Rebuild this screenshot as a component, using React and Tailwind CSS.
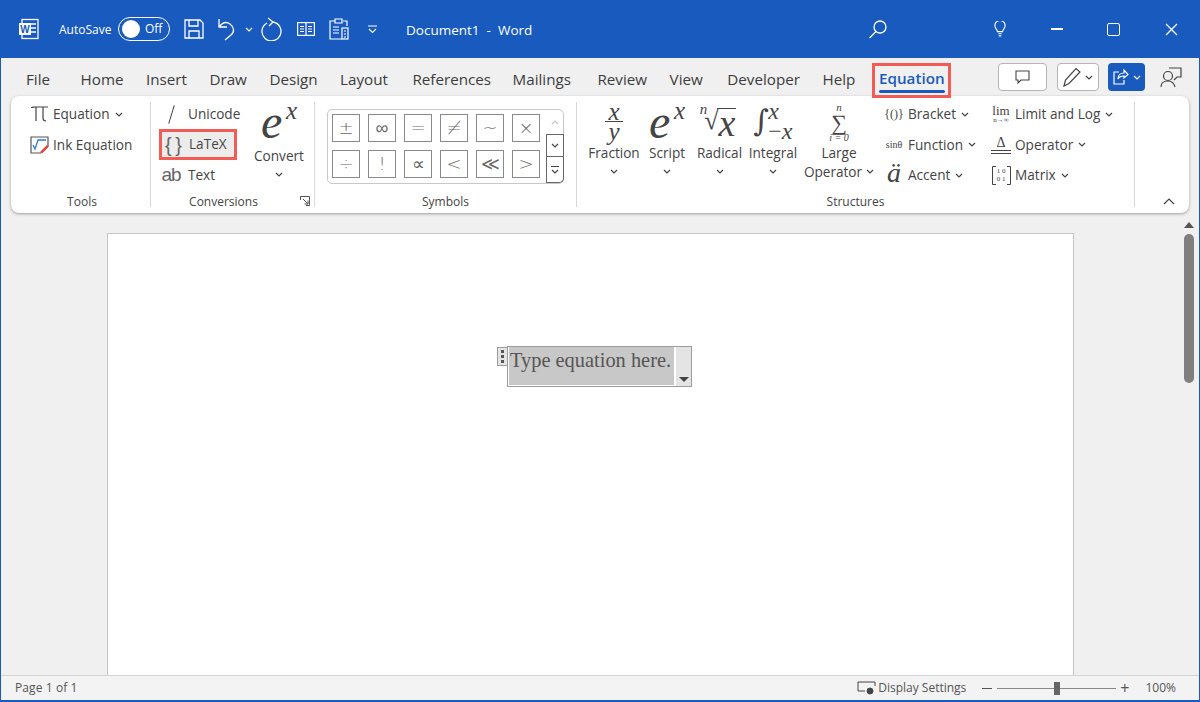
import React from "react";

const Chev = ({ className = "" }) => (
  <svg width="8" height="5" viewBox="0 0 8 5" className={className} fill="none" stroke="#444" strokeWidth="1.2">
    <path d="M1 1l3 3 3-3" />
  </svg>
);

const Tab = ({ children, className = "" }) => (
  <span className={`text-[15.2px] leading-[20px] text-[#3c3c3c] ${className}`}>{children}</span>
);

const Row = ({ icon, label, chev, iconW = "w-[20px]", gap = "ml-[4px]" }) => (
  <div className="flex items-center h-[30.5px] text-[13.6px] text-[#444]">
    <div className={`${iconW} flex items-center justify-center shrink-0`}>{icon}</div>
    <span className={gap}>{label}</span>
    {chev && <Chev className="ml-[5px]" />}
  </div>
);

const Big = ({ w, top, lines, chevInline }) => (
  <div className={`${w} flex flex-col items-center shrink-0 text-[13.6px] leading-[19px] text-[#444]`}>
    <div className="h-[44px] w-full flex items-center justify-center text-[#444]">{top}</div>
    {lines.map((l, i) => (
      <div key={i} className="flex items-center whitespace-nowrap">
        {l}
        {chevInline && i === lines.length - 1 && <Chev className="ml-[4px]" />}
      </div>
    ))}
    {!chevInline && <Chev className="mt-[7px]" />}
  </div>
);

const serif = "font-['Liberation_Serif',serif] italic";

const Ex = ({ className = "" }) => (
  <div className={`${serif} relative w-[36px] h-[42px] text-[#444] ${className}`}>
    <span className="absolute left-0 top-[-2px] text-[48px] leading-[48px]">e</span>
    <span className="absolute right-0 top-[-2px] text-[25px] leading-[25px]">x</span>
  </div>
);

const symbols = ["±", "∞", "=", "≠", "~", "×", "÷", "!", "∝", "<", "≪", ">"];

const Group = ({ w, label, children, extra }) => (
  <div className={`${w} h-full flex flex-col border-r border-[#d9d9d9] relative shrink-0`}>
    <div className="flex-1 min-h-0 flex">{children}</div>
    <div className="h-[15px] text-center text-[12px] leading-[15px] text-[#444] -mb-[2px]">{label}</div>
    {extra}
  </div>
);

export default function App() {
  return (
    <div className="w-[1200px] h-[702px] flex flex-col overflow-hidden bg-[#f0f0f0] border-x border-b-2 border-[#185abd] font-['Open_Sans',sans-serif]">
      {/* title bar */}
      <div className="h-[58px] -mx-px shrink-0 bg-[#185abd] flex items-center text-white">
        <svg width="22" height="22" viewBox="0 0 22 22" className="ml-[18px]" fill="none">
          <rect x="4" y="1.5" width="16" height="19" fill="#185abd" stroke="#fff" strokeWidth="1.3" />
          <path d="M12 6h6M12 10h6M12 14h6" stroke="#fff" strokeWidth="1.5" />
          <rect x="1" y="5" width="12" height="12" fill="#fff" />
          <text x="2.2" y="15" fontSize="10" fontWeight="700" fill="#185abd" fontFamily="Liberation Sans">W</text>
        </svg>
        <span className="ml-[19px] mt-[2px] text-[12px] w-[51px] whitespace-nowrap">AutoSave</span>
        <div className="ml-[8px] w-[52px] h-[24px] rounded-full border border-white flex items-center pl-[3px]">
          <span className="w-[18px] h-[18px] rounded-full bg-white" />
          <span className="ml-[5px] text-[12px]">Off</span>
        </div>
        <svg width="20" height="22" viewBox="0 0 20 22" className="ml-[14px]" fill="none" stroke="#fff" strokeWidth="1.3">
          <path d="M1 2h15l3 3v15H1zM5 2v6h9V2M5 20v-7h10v7" />
        </svg>
        <svg width="18" height="24" viewBox="0 0 18 24" className="ml-[14px]" fill="none" stroke="#fff" strokeWidth="1.3">
          <path d="M1 2v8h8M1 10c3-4 7-6 11-3 4 3 5 8 1 11l-6 5" />
        </svg>
        <Chev className="ml-[9px] [&_path]:stroke-white" />
        <svg width="22" height="24" viewBox="0 0 22 24" className="ml-[8px]" fill="none" stroke="#fff" strokeWidth="1.3">
          <path d="M7 1l5 4-4 4M12 5a9.500 9.500 0 1 1-6 1" />
        </svg>
        <svg width="18" height="14" viewBox="0 0 18 14" className="ml-[14px]" fill="none" stroke="#fff" strokeWidth="1.2">
          <rect x="0.6" y="0.6" width="16.8" height="12.8" />
          <path d="M9 1v12M3 4.500h4M3 7h4M3 9.500h4M11 4.500h4M11 7h4M11 9.500h4" />
        </svg>
        <svg width="20" height="22" viewBox="0 0 20 22" className="ml-[14px]" fill="none" stroke="#fff" strokeWidth="1.2">
          <path d="M6 3H1v18h12M14 3h4v5M6 1h7v4H6zM4 9h6M4 12h6M4 15h6" />
          <rect x="13" y="10" width="6" height="11" />
          <path d="M15 13h2M15 16h2M15 19h2" />
        </svg>
        <svg width="9" height="9" viewBox="0 0 9 9" className="ml-[19px]" fill="none" stroke="#fff" strokeWidth="1.1">
          <path d="M0 1h9M1 4l3.500 3.500L8 4" />
        </svg>
        <span className="ml-[29px] mt-[2px] text-[13.5px] whitespace-pre">Document1  -  Word</span>
        <svg width="20" height="20" viewBox="0 0 20 20" className="ml-[336px]" fill="none" stroke="#fff" strokeWidth="1.3">
          <circle cx="12" cy="8" r="6" />
          <path d="M8 12.500L1.500 19" />
        </svg>
        <svg width="12" height="16" viewBox="0 0 14 18" className="ml-[106px]" fill="none" stroke="#fff" strokeWidth="1.3">
          <path d="M4 12c0-2-3-3.500-3-7a6 6 0 0 1 12 0c0 3.500-3 5-3 7zM5 14.500h4M5.500 17h3" />
        </svg>
        <div className="ml-[45px] w-[12px] h-[1.5px] bg-white" />
        <div className="ml-[44px] w-[13px] h-[13px] rounded-[2px] border-[1.3px] border-white" />
        <svg width="13" height="13" viewBox="0 0 13 13" className="ml-[45px]" fill="none" stroke="#fff" strokeWidth="1.3">
          <path d="M1 1l11 11M12 1L1 12" />
        </svg>
      </div>

      {/* tabs */}
      <div className="h-[38px] shrink-0 flex items-center pl-[25px] relative">
        <div className="flex gap-[22.5px] mt-[3.5px]">
          <Tab className="mr-[8px]">File</Tab>
          <Tab>Home</Tab>
          <Tab>Insert</Tab>
          <Tab>Draw</Tab>
          <Tab>Design</Tab>
          <Tab>Layout</Tab>
          <Tab className="ml-[2px]">References</Tab>
          <Tab className="-ml-px">Mailings</Tab>
          <Tab className="ml-[4px]">Review</Tab>
          <Tab>View</Tab>
          <Tab className="ml-[2px]">Developer</Tab>
          <Tab>Help</Tab>
        </div>
        <div className="ml-[17px] mt-[7px] w-[79px] h-[35px] border-[3px] border-[#f25c54] flex flex-col items-center justify-center bg-[#f0f0f0] z-10">
          <span className="text-[15.2px] leading-[20px] font-semibold text-[#185abd]">Equation</span>
          <span className="w-[66px] h-[3px] rounded-full bg-[#185abd] mt-[2px]" />
        </div>
        <div className="ml-auto flex items-center mr-[17px]">
          <div className="w-[49px] h-[28px] rounded-[4px] bg-white border border-[#b5b5b5] flex items-center justify-center">
            <svg width="15" height="14" viewBox="0 0 15 14" fill="none" stroke="#444" strokeWidth="1.1">
              <path d="M1 1h13v9H6l-3 3v-3H1z" />
            </svg>
          </div>
          <div className="ml-[10px] w-[42px] h-[28px] rounded-[4px] bg-white border border-[#b5b5b5] flex items-center justify-center gap-[4px]">
            <svg width="18" height="20" viewBox="0 0 18 20" fill="none" stroke="#444" strokeWidth="1.2">
              <path d="M1 19l1.500-6L13 1.500l4 3.500L6 16.500z" />
            </svg>
            <Chev />
          </div>
          <div className="ml-[9px] w-[37px] h-[28px] rounded-[4px] bg-[#185abd] flex items-center justify-center gap-[4px]">
            <svg width="16" height="16" viewBox="0 0 16 16" fill="none" stroke="#fff" strokeWidth="1.2">
              <path d="M6 3H1v12h10v-4M5 10c0-4 3-6 6-6V1l4 4.500L11 9V7c-3 0-5 1-6 3z" />
            </svg>
            <Chev className="[&_path]:stroke-white" />
          </div>
          <svg width="22" height="22" viewBox="0 0 22 22" className="ml-[15px]" fill="none" stroke="#444" strokeWidth="1.2">
            <circle cx="8" cy="10" r="4.500" />
            <path d="M1 21c0-4 3-6 7-6s6 2 7 6M9 2h12v9h-4l-3 3" />
          </svg>
        </div>
      </div>

      {/* ribbon */}
      <div className="h-[117px] shrink-0 mx-[10px] rounded-[8px] bg-white shadow-[0_1px_3px_rgba(0,0,0,0.35)] flex py-[6px] relative">
        <Group w="w-[140px]" label={<span className="block pl-[3px]">Tools</span>}>
          <div className="pl-[18px] -mt-[3px]">
            <Row
              icon={
                <svg width="17" height="16" viewBox="0 0 17 16" fill="none" stroke="#444" strokeWidth="1.2">
                  <path d="M0 1.500c2 0 3-.500 4-.500h13M5 1v14M12 1v11c0 2 1 3 3 3" />
                </svg>
              }
              label="Equation"
              chev
            />
            <Row
              icon={
                <svg width="19" height="18" viewBox="0 0 19 18" fill="none">
                  <path d="M11 17H1V1h17v9" stroke="#555" strokeWidth="1.2" />
                  <path d="M3 9l2 4 3-9h8" stroke="#2b7cd3" strokeWidth="1.3" />
                  <path d="M10 16l7-7 2 1.500-7 7z" fill="#d8453a" />
                </svg>
              }
              label="Ink Equation"
            />
          </div>
        </Group>
        <Group
          w="w-[164px]"
          label={<span className="block pr-[18px]">Conversions</span>}
          extra={
            <svg width="10" height="10" viewBox="0 0 10 10" className="absolute right-[4px] bottom-[1px]" fill="none" stroke="#555">
              <path d="M.500 4V.500h9v9H6M3 3l5 5M8 4.500V8H4.500" />
            </svg>
          }
        >
          <div className="flex -mt-[3px]">
            <div className="ml-[8px] w-[78px]">
              <Row
                icon={<span className="block w-px h-[19px] rotate-[17deg] bg-[#444]" />}
                label="Unicode"
                iconW="w-[24px]"
                gap="ml-[5px]"
              />
              <div className="h-[31px] -my-[0.5px] border-[3px] border-[#f25c54] bg-[#ececec] flex items-center text-[13.6px] text-[#444] pl-[3px]">
                <span className="font-['Liberation_Sans',sans-serif] text-[20px] leading-[20px] w-[22px] whitespace-pre tracking-[-1px] text-[#666]">{"{ }"}</span>
                <span className="ml-[2px]">LaTeX</span>
              </div>
              <Row
                icon={<span className="text-[19px] leading-[19px] text-[#666] tracking-[-1px] font-['Liberation_Sans',sans-serif]">ab</span>}
                label="Text"
                iconW="w-[24px]"
                gap="ml-[5px]"
              />
            </div>
            <div className="ml-[17px] mt-[2.5px]">
              <Big w="w-[50px]" top={<Ex className="-translate-y-[3px]" />} lines={["Convert"]} />
            </div>
          </div>
        </Group>
        <Group w="w-[262px]" label="Symbols">
          <div className="ml-[12px] mt-[7px] w-[237px] h-[75px] rounded-[5px] border border-[#c8c8c8] flex">
            <div className="grid grid-cols-[repeat(6,28px)] gap-[8px] py-[4px] pl-[4px] w-[218px] shrink-0 content-start">
              {symbols.map((s) => (
                <div key={s} className="w-[28px] h-[28px] border border-[#8a8a8a] flex items-center justify-center text-[18px] leading-none text-[#666] font-['DejaVu_Sans',sans-serif] font-light">
                  {s}
                </div>
              ))}
            </div>
            <div className="flex-1 flex flex-col -mr-px">
              <div className="h-[24px] flex items-center justify-center">
                <Chev className="rotate-180 opacity-30" />
              </div>
              <div className="h-[23px] border border-[#666] flex items-center justify-center">
                <Chev />
              </div>
              <div className="flex-1 border border-t-0 border-[#666] rounded-br-[5px] flex flex-col items-center justify-center">
                <div className="w-[8px] h-px bg-[#444] mb-[2px]" />
                <Chev />
              </div>
            </div>
          </div>
        </Group>
        <Group w="w-[558px]" label="Structures">
          <div className="flex pl-[11px] -mt-[3px]">
            <Big
              w="w-[52px]"
              top={
                <div className={`${serif} flex flex-col items-center text-[25px] leading-[16px] mt-[1px]`}>
                  <span>x</span>
                  <span className="w-[18px] h-px bg-[#444] mt-px mb-[2px]" />
                  <span>y</span>
                </div>
              }
              lines={["Fraction"]}
            />
            <Big w="w-[54px]" top={<Ex />} lines={["Script"]} />
            <Big
              w="w-[51px]"
              top={
                <div className={`${serif} flex items-start text-[#444] -ml-[3px]`}>
                  <span className="text-[15px] leading-[15px] -mr-[3px]">n</span>
                  <span className="text-[26px] leading-[38px] not-italic -mr-[1px]">√</span>
                  <span className="text-[38px] leading-[28px] border-t-[1.5px] border-[#444] mt-[6px] px-px">x</span>
                </div>
              }
              lines={["Radical"]}
            />
            <Big
              w="w-[56px]"
              top={
                <div className={`${serif} flex items-center text-[#444]`}>
                  <span className="text-[30px] leading-[34px] font-['DejaVu_Serif',serif] not-italic">∫</span>
                  <div className="flex flex-col items-start -ml-[1px] text-[24px] leading-[20px]">
                    <span>x</span>
                    <span className="whitespace-nowrap"><span className="not-italic">−</span>x</span>
                  </div>
                </div>
              }
              lines={["Integral"]}
            />
            <Big
              w="w-[76px]"
              top={
                <div className="font-['Liberation_Serif',serif] flex flex-col items-center text-[#444] mt-[3px]">
                  <span className="italic text-[11px] leading-[9px]">n</span>
                  <span className="text-[22px] leading-[21px]">∑</span>
                  <span className="text-[10px] leading-[10px] italic whitespace-nowrap">i = 0</span>
                </div>
              }
              lines={["Large", "Operator"]}
              chevInline
            />
            <div className="ml-[7px] w-[107px]">
              <Row
                icon={<span className="font-['Liberation_Serif',serif] text-[12px] tracking-[0px]">{"{()}"}</span>}
                label="Bracket"
                chev
              />
              <Row
                icon={<span className="font-['Liberation_Serif',serif] text-[10px]">sinθ</span>}
                label="Function"
                chev
              />
              <Row
                icon={<span className={`${serif} text-[28px] leading-[28px] -mt-[4px]`}>ä</span>}
                label="Accent"
                chev
              />
            </div>
            <div>
              <Row
                icon={
                  <div className="font-['Liberation_Serif',serif] flex flex-col items-center leading-none">
                    <span className="text-[13px] leading-[11px]">lim</span>
                    <span className="text-[7px] leading-[8px]">n→∞</span>
                  </div>
                }
                label="Limit and Log"
                chev
              />
              <Row
                icon={
                  <div className="font-['Liberation_Serif',serif] flex flex-col items-center w-full">
                    <span className="text-[14px] leading-[14px]">Δ</span>
                    <span className="w-full h-[4px] border-y border-[#444]" />
                  </div>
                }
                label="Operator"
                chev
              />
              <Row
                icon={
                  <div className="relative font-['Liberation_Serif',serif] w-[19px] h-[19px] flex flex-col items-center justify-center text-[7px] leading-[8px]">
                    <svg width="19" height="19" viewBox="0 0 19 19" className="absolute inset-0" fill="none" stroke="#444">
                      <path d="M4 .500H.500v18H4M15 .500h3.500v18H15" />
                    </svg>
                    <span>1 0</span>
                    <span>0 1</span>
                  </div>
                }
                label="Matrix"
                chev
              />
            </div>
          </div>
        </Group>
        <div className="flex-1 flex items-end justify-end pr-[14px] pb-[2px]">
          <svg width="12" height="7" viewBox="0 0 12 7" fill="none" stroke="#444" strokeWidth="1.2">
            <path d="M1 6l5-5 5 5" />
          </svg>
        </div>
      </div>

      {/* document */}
      <div className="flex-1 min-h-0 flex">
        <div className="flex-1 pl-[106px] pt-[21px] overflow-hidden -mt-px">
          <div className="w-[967px] h-[600px] bg-white border border-[#c6c6c6] pl-[399px] pt-[112px]">
            <div className="relative w-[185px] h-[41px] border border-[#9c9c9c] bg-white flex">
              <div className="absolute left-[-11px] top-0 w-[11px] h-[19px] border border-[#9c9c9c] bg-[#e4e4e4] flex flex-col items-center justify-center gap-[2px]">
                <span className="w-[3px] h-[3px] bg-[#555]" />
                <span className="w-[3px] h-[3px] bg-[#555]" />
                <span className="w-[3px] h-[3px] bg-[#555]" />
              </div>
              <div className="w-[165px] h-[38px] ml-px bg-[#c8c8c8] font-['Liberation_Serif',serif] text-[20.4px] leading-[26px] text-[#555] whitespace-nowrap pl-[1px]">
                Type equation here.
              </div>
              <div className="flex-1 ml-[2px] bg-[#e4e4e4] flex items-end justify-center pb-[4px]">
                <span className="w-0 h-0 border-x-[5px] border-x-transparent border-t-[5px] border-t-[#444]" />
              </div>
            </div>
          </div>
        </div>
        <div className="w-[15px] mr-[3px] pt-[9px] flex flex-col items-center shrink-0">
          <span className="w-0 h-0 border-x-[5px] border-x-transparent border-b-[6px] border-b-[#555]" />
          <div className="mt-[6px] w-[10px] h-[149px] rounded-full bg-[#7f7f7f]" />
        </div>
      </div>

      {/* status bar */}
      <div className="h-[25px] shrink-0 bg-[#f3f3f3] border-t border-[#d4d4d4] flex items-center text-[12px] text-[#555]">
        <span className="ml-[14px] tracking-[0.1px]">Page 1 of 1</span>
        <svg width="20" height="14" viewBox="0 0 20 14" className="ml-auto" fill="none" stroke="#444">
          <path d="M8 10H1V1h17v4" />
          <circle cx="13" cy="10" r="3" fill="#444" />
        </svg>
        <span className="ml-[1px]">Display Settings</span>
        <div className="ml-[16px] w-[10px] h-px bg-[#555]" />
        <div className="ml-[5px] w-[119px] h-px bg-[#888] relative">
          <span className="absolute left-[57px] -top-[6px] w-[6px] h-[13px] bg-[#666]" />
        </div>
        <span className="ml-[4px] text-[16px] leading-[15px]">+</span>
        <span className="ml-[16px] mr-[23px]">100%</span>
      </div>
    </div>
  );
}
